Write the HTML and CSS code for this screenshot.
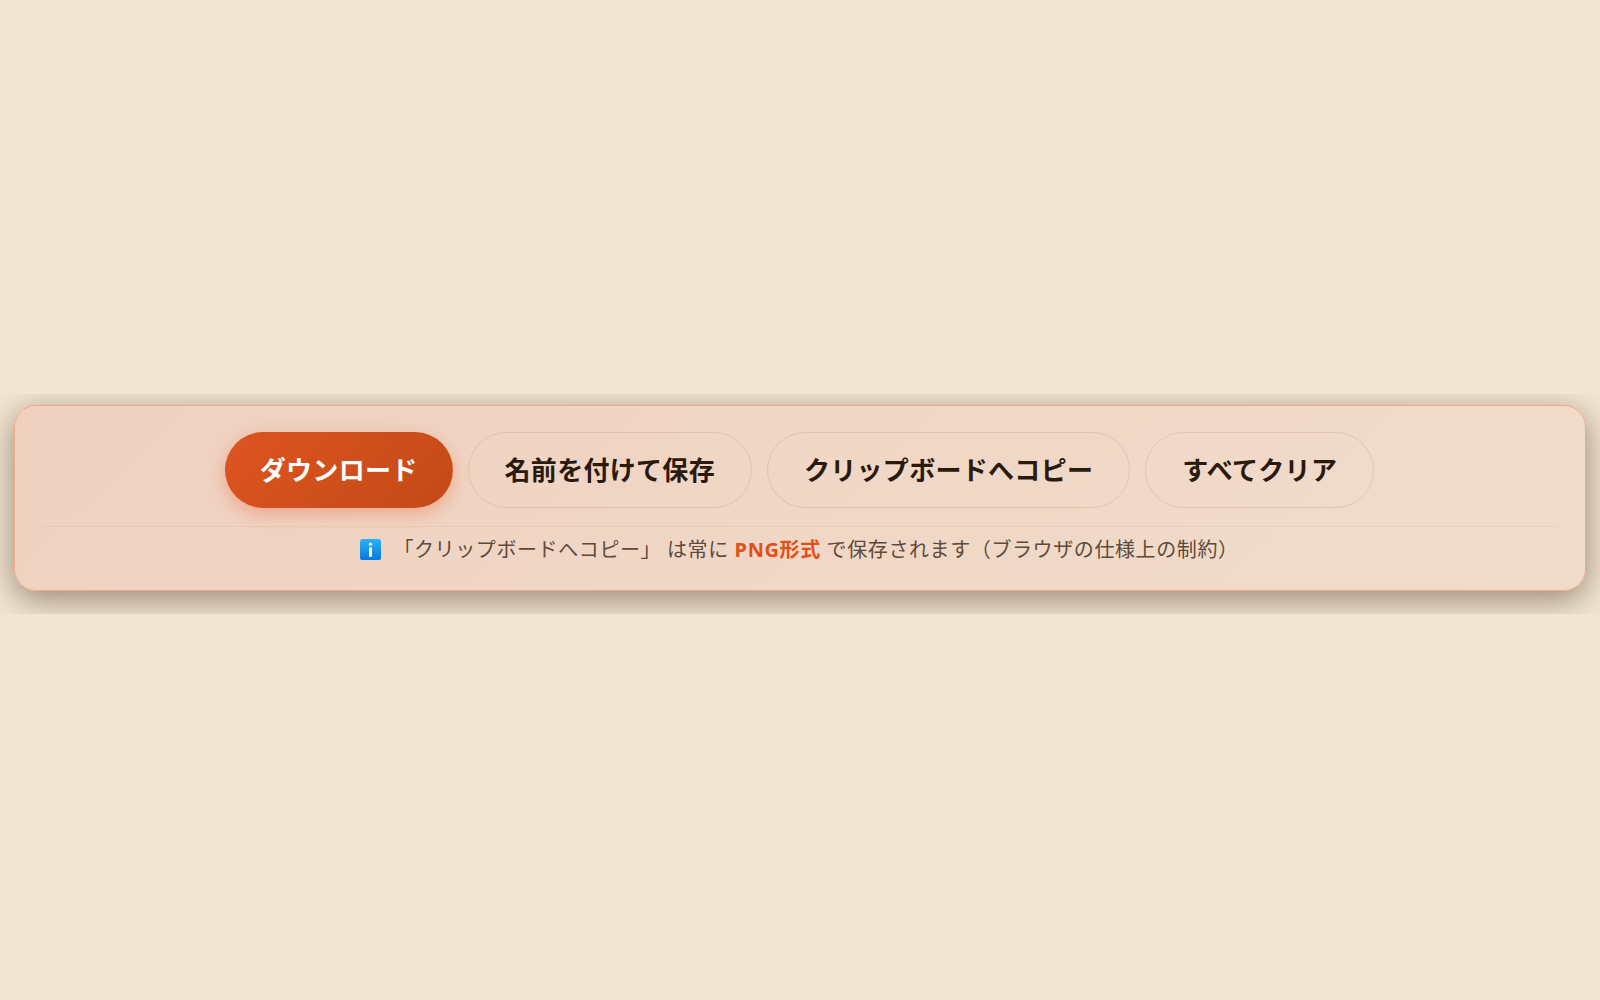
FILE: index.html
```html
<!DOCTYPE html>
<html lang="ja">
  <head>
    <meta charset="UTF-8" />
    <title>保存</title>
    <link rel="stylesheet" href="styles.css">
  </head>
  <body>
    <div class="toolbar-clip">
      <div class="toolbar">
        <div class="actions">
          <button class="btn primary">ダウンロード</button>
          <button class="btn">名前を付けて保存</button>
          <button class="btn">クリップボードへコピー</button>
          <button class="btn">すべてクリア</button>
        </div>
        <p class="note">
          <svg class="info" viewBox="0 0 20 20" aria-hidden="true">
            <defs>
              <linearGradient id="infoFill" x1="0" y1="0" x2="0" y2="1">
                <stop offset="0" stop-color="#2bb3f8" />
                <stop offset="1" stop-color="#0a78dc" />
              </linearGradient>
            </defs>
            <rect x="0" y="0" width="20" height="20" rx="2.5" fill="url(#infoFill)" />
            <circle cx="10" cy="4.9" r="1.5" fill="#fff" />
            <rect x="8.6" y="8" width="2.8" height="9" fill="#fff" />
          </svg>
          <span>「クリップボードへコピー」 は常に <strong>PNG形式</strong> で保存されます（ブラウザの仕様上の制約）</span>
        </p>
      </div>
    </div>
  </body>
</html>
```

FILE: styles.css
```css
* {
  margin: 0;
  padding: 0;
  box-sizing: border-box;
}

html,
body {
  height: 100%;
}

body {
  background: #f2e5d1;
  font-family: "Noto Sans", "Noto Sans CJK JP", sans-serif;
  padding-top: 394px;
}

.toolbar-clip {
  height: 220px;
  padding: 11px 14px 0;
  overflow: hidden;
}

.toolbar {
  height: 186px;
  padding: 26px 28px 0 27px;
  background: linear-gradient(135deg, #f0d1c0, #f0dccb);
  border: 1.5px solid #eea88c;
  border-radius: 22px;
  box-shadow: 0 8px 32px rgba(60, 40, 20, 0.5);
}

.actions {
  display: flex;
  justify-content: center;
  gap: 15px;
  padding-bottom: 18px;
  border-bottom: 1px solid rgba(120, 80, 50, 0.07);
}

.btn {
  height: 76px;
  padding: 0 36px 3px;
  background: transparent;
  border: 1px solid rgba(120, 80, 50, 0.14);
  border-radius: 38px;
  font: bold 26px "Noto Sans", "Noto Sans CJK JP", sans-serif;
  letter-spacing: 0.3px;
  color: #2a1a0e;
}

.btn.primary {
  padding: 0 34px 3px;
  background: linear-gradient(135deg, #de5420, #c24a18);
  border-color: transparent;
  box-shadow: 0 6px 18px rgba(226, 85, 32, 0.35);
  color: #fff;
}

.note {
  display: flex;
  justify-content: center;
  align-items: center;
  gap: 12px;
  padding-top: 7px;
  font-size: 20px;
  letter-spacing: 0.6px;
  color: #5e4a3a;
}

.note strong {
  color: #e0501a;
}

.info {
  width: 21px;
  height: 21px;
  margin-top: 2px;
}
```
